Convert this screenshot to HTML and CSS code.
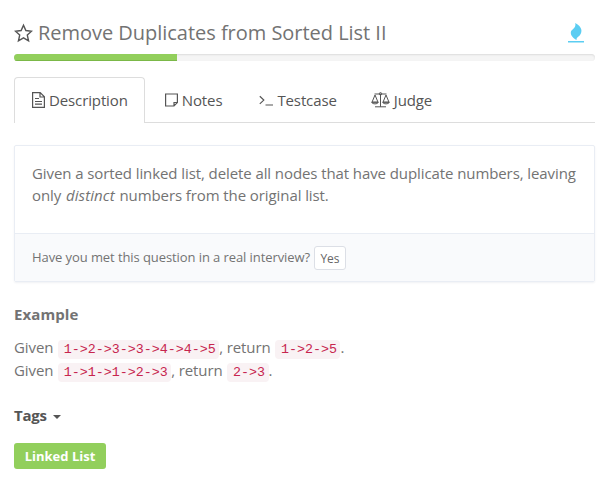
FILE: index.html
```
<!DOCTYPE html>
<html lang="en">
<head>
<meta charset="utf-8">
<title>Remove Duplicates from Sorted List II</title>
<link rel="stylesheet" href="styles.css">
</head>
<body>
<main class="problem">
  <header class="heading">
    <svg class="star" viewBox="0 0 20 20"><path d="M10 1.8l2.5 5.6 6 .7-4.5 4.1 1.3 6-5.3-3.1-5.3 3.1 1.3-6-4.5-4.1 6-.7z"/></svg>
    <h1>Remove Duplicates from Sorted List II</h1>
    <svg class="flame" viewBox="0 0 16 20"><path d="M7.2 0C14.5 4 14.4 8.5 12 12C10.5 14 8.3 14.3 8.6 17C6 15.5 2.6 13 2.8 9.5C3 6 8.7 5.5 7.2 0zM0 18h16v1.6H0z"/></svg>
  </header>
  <div class="progress"><div class="bar"></div></div>
  <nav class="tabs">
    <a class="tab active"><svg class="doc" viewBox="0 0 13 16"><path d="M.6.6h7.6l4.2 4.2v10.6H.6zM8 .6v4.4h4.4M3 6.5h4M3 9.5h7M3 12.2h7"/></svg>Description</a>
    <a class="tab notes"><svg class="note" viewBox="0 0 13 14"><path d="M.6 1h11.8v8.6L9 13H.6zM12.4 9.5H9V13"/></svg>Notes</a>
    <a class="tab testcase"><svg class="term" viewBox="0 0 15 14"><path d="M.8 3.3l4 3.8-4 3.8M6.5 12H14"/></svg>Testcase</a>
    <a class="tab"><svg class="scale" viewBox="0 0 19 16"><path d="M3.5 2h12M9.5 2v12.8M4 14.8h11M4 3L1 10.2h6zM15 3l-3 7.2h6zM.7 10.2h6.6c-.5 2.2-6.1 2.2-6.6 0zM11.7 10.2h6.6c-.5 2.2-6.1 2.2-6.6 0z"/><circle cx="9.5" cy="1.8" r="1.2"/></svg>Judge</a>
  </nav>
  <section class="card">
    <p class="statement">Given a sorted linked list, delete all nodes that have duplicate numbers, leaving only <em>distinct</em> numbers from the original list.</p>
    <div class="question"><span>Have you met this question in a real interview?</span><button>Yes</button></div>
  </section>
  <h2>Example</h2>
  <p class="example">Given <code>1-&gt;2-&gt;3-&gt;3-&gt;4-&gt;4-&gt;5</code>, return <code>1-&gt;2-&gt;5</code>.<br>Given <code>1-&gt;1-&gt;1-&gt;2-&gt;3</code>, return <code>2-&gt;3</code>.</p>
  <h2 class="tags">Tags<span class="caret"></span></h2>
  <a class="label">Linked List</a>
</main>
</body>
</html>
```
FILE: styles.css
```
* { box-sizing: border-box; }
body {
  margin: 0;
  background: #fff;
  color: #737373;
  font: 15px/22px "Open Sans", sans-serif;
}
.problem { width: 581px; margin-left: 14px; padding-top: 18px; }
svg { fill: none; stroke: #555; flex: none; }
.heading { display: flex; align-items: center; height: 30px; }
.star { width: 19px; height: 20px; margin-top: -1px; stroke-width: 1.5; }
h1 { margin: 0 0 0 5px; font-size: 20px; line-height: 30px; font-weight: 400; letter-spacing: -.03px; flex: 1; }
.flame { width: 16px; height: 20px; margin-right: 11px; fill: #5bcdf2; stroke: none; }
.progress {
  height: 7px;
  margin-top: 6px;
  border-radius: 4px;
  background: #f5f5f5;
  box-shadow: inset 0 1px 2px rgba(0, 0, 0, .1);
  overflow: hidden;
}
.bar { width: 163px; height: 7px; background: #92cf5c; box-shadow: inset 0 -1px 0 #7bb848; }
.tabs { display: flex; height: 46px; margin-top: 16px; border-bottom: 1px solid #ddd; }
.tab {
  display: flex;
  align-items: center;
  height: 46px;
  padding: 0 16px 1px 17px;
  border: 1px solid transparent;
  border-bottom: 0;
  margin-right: 1px;
  color: #555;
  letter-spacing: -.12px;
}
.tab.active { border-color: #ddd; border-radius: 4px 4px 0 0; background: #fff; }
.tab.notes { margin: 0 2px 0 1px; }
.tab.testcase { margin-right: -1px; }
.doc { width: 13px; height: 16px; margin-right: 4px; stroke-width: 1.2; }
.note { width: 13px; height: 14px; margin-right: 4px; stroke-width: 1.2; }
.term { width: 15px; height: 14px; margin-right: 3px; stroke-width: 1.2; }
.scale { width: 19px; height: 16px; margin-right: 4px; stroke-width: 1; }
.card {
  height: 137px;
  margin-top: 22px;
  border: 1px solid #e9edf4;
  border-radius: 2px;
  box-shadow: 0 1px 2px rgba(60, 80, 120, .08);
}
.statement { height: 87px; margin: 0; padding: 16px 12px 0 17px; letter-spacing: -.09px; }
.statement em { margin: 0 1px; letter-spacing: .08px; }
.question {
  display: flex;
  align-items: center;
  height: 48px;
  padding-left: 17px;
  border-top: 1px solid #e9edf4;
  background: #f9fafc;
  font-size: 13px;
}
.question span { margin: -1px 4px 0 0; letter-spacing: -.085px; }
button {
  width: 32px;
  height: 24px;
  padding: 1px 0 0;
  border: 1px solid #dcdfe6;
  border-radius: 3px;
  background: #fff;
  color: #666;
  font: 12px/21px "Open Sans", sans-serif;
}
h2 { margin: 21px 0 0; font-size: 15px; line-height: 22px; font-weight: 700; letter-spacing: .1px; }
.example { margin: 11px 0 0; line-height: 23px; letter-spacing: -.1px; }
code {
  margin-left: .6px;
  padding: 2px 3.5px 2px 6px;
  border-radius: 4px;
  background: #f9f2f4;
  color: #c7254e;
  font: 13.33px/17px "Liberation Mono", monospace;
  letter-spacing: 0;
}
.tags { color: #555; margin-top: 22px; letter-spacing: -.2px; }
.caret {
  display: inline-block;
  margin-left: 6px;
  border: 4px solid transparent;
  border-top-color: #555;
  border-bottom: 0;
  vertical-align: middle;
}
.label {
  display: block;
  width: 92px;
  height: 26px;
  margin-top: 17px;
  border-radius: 3px;
  background: #92cf5c;
  color: #fff;
  font-size: 13px;
  line-height: 26px;
  font-weight: 700;
  text-align: center;
}
```
